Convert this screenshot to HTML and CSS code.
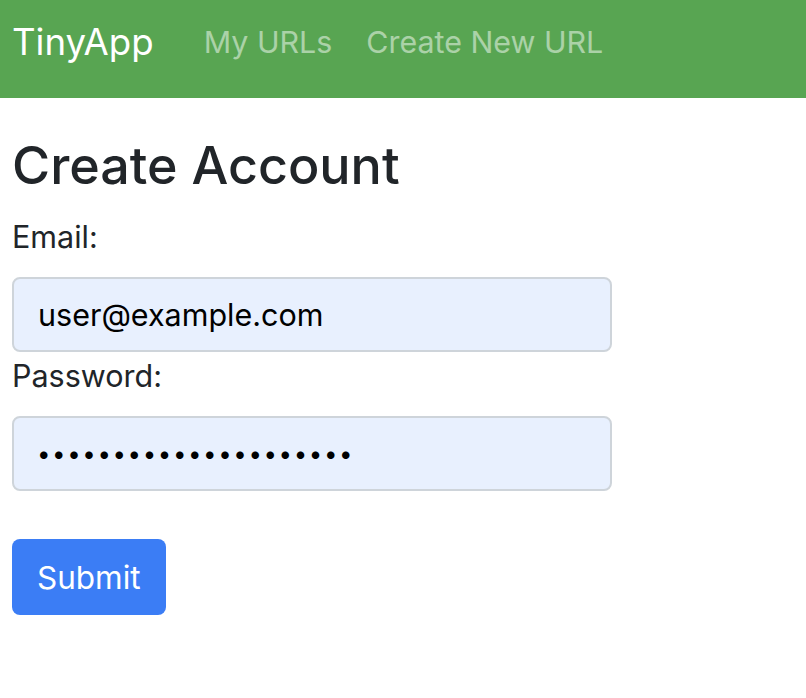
FILE: index.html
```html
<!DOCTYPE html>
<html lang="en">
<head>
<meta charset="utf-8">
<title>TinyApp</title>
<link rel="stylesheet" href="styles.css">
</head>
<body>
<nav class="navbar">
  <a class="brand" href="#">TinyApp</a>
  <a class="nav-link" href="#">My URLs</a>
  <a class="nav-link" href="#">Create New URL</a>
</nav>
<main class="main">
  <h1 class="title">Create Account</h1>
  <form class="form">
    <label class="label" for="email">Email:</label>
    <input class="input" id="email" type="text" value="user@example.com">
    <label class="label" for="password">Password:</label>
    <input class="input input-pass" id="password" type="password" value="passwordpassword12345">
    <button class="btn" type="button">Submit</button>
  </form>
</main>
</body>
</html>
```
FILE: styles.css
```css
* { box-sizing: border-box; }
body {
  margin: 0;
  font-family: Inter, "Noto Sans", sans-serif;
  color: #212529;
  background: #fff;
}
.navbar {
  height: 98px;
  background: #58a552;
  display: flex;
  align-items: center;
  padding: 0 12px 14px;
}
.brand {
  color: #fff;
  text-decoration: none;
  font-size: 36.6px;
  margin-right: 50px;
}
.nav-link {
  color: rgba(255, 255, 255, 0.5);
  text-decoration: none;
  font-size: 30.4px;
  margin-right: 34px;
}
.main {
  padding: 37px 12px 0;
}
.title {
  margin: 0 0 16px;
  font-size: 52px;
  font-weight: 500;
  line-height: 1.2;
}
.form {
  display: flex;
  flex-direction: column;
  align-items: flex-start;
}
.label {
  font-size: 30.5px;
  line-height: 48px;
  margin-bottom: 16px;
}
.input {
  width: 600px;
  height: 75px;
  border: 2px solid #ced4da;
  border-radius: 8px;
  background: #e8f0fe;
  padding: 0 24px;
  font-family: Inter, sans-serif;
  font-size: 30.5px;
  color: #000;
}
.input-pass {
  font-size: 24px;
  letter-spacing: 1.6px;
  padding-left: 23px;
  margin-bottom: 48px;
}
.btn {
  height: 76px;
  padding: 0 25px;
  border: none;
  border-radius: 8px;
  background: #3b7df5;
  color: #fff;
  font-family: Inter, sans-serif;
  font-size: 31.5px;
}
```
